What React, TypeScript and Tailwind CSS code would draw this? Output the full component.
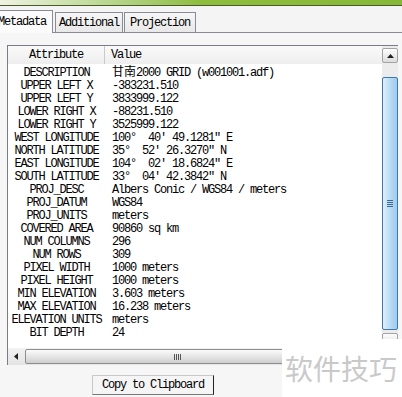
import React from 'react';

const rows: [string, React.ReactNode][] = [
  ['DESCRIPTION', <><span className="tracking-normal">甘南</span>2000 GRID (w001001.adf)</>],
  ['UPPER LEFT X', '-383231.510'],
  ['UPPER LEFT Y', '3833999.122'],
  ['LOWER RIGHT X', '-88231.510'],
  ['LOWER RIGHT Y', '3525999.122'],
  ['WEST LONGITUDE', '100°  40′ 49.1281″ E'],
  ['NORTH LATITUDE', '35°  52′ 26.3270″ N'],
  ['EAST LONGITUDE', '104°  02′ 18.6824″ E'],
  ['SOUTH LATITUDE', '33°  04′ 42.3842″ N'],
  ['PROJ_DESC', 'Albers Conic / WGS84 / meters'],
  ['PROJ_DATUM', 'WGS84'],
  ['PROJ_UNITS', 'meters'],
  ['COVERED AREA', '90860 sq km'],
  ['NUM COLUMNS', '296'],
  ['NUM ROWS', '309'],
  ['PIXEL WIDTH', '1000 meters'],
  ['PIXEL HEIGHT', '1000 meters'],
  ['MIN ELEVATION', '3.603 meters'],
  ['MAX ELEVATION', '16.238 meters'],
  ['ELEVATION UNITS', 'meters'],
  ['BIT DEPTH', '24'],
];

const App: React.FC = () => {
  return (
    <div className="relative w-[402px] h-[397px] overflow-hidden bg-[#f0f0f0] text-black text-[12px] tracking-[-1.2px] font-['Liberation_Mono','Noto_Sans_CJK_SC',monospace] whitespace-pre">
      {/* title strip */}
      <div className="h-[6px] bg-gradient-to-r from-[#eef3e2] via-[#8dbd3c] to-[#86b838] border-b border-[#4b5a2a]" />

      {/* Tabs */}
      <div className="h-[27px] flex items-end border-b border-[#898c95] bg-[#f4f4f4]">
        <div className="ml-[-10px] w-[63px] h-[23px] mb-[-1px] pl-[8px] flex items-center bg-[#fbfbfb] border-t border-r border-[#898c95]">
          Metadata
        </div>
        <div className="ml-[2px] w-[68px] h-[20px] flex items-center justify-center bg-gradient-to-b from-[#f7f7f7] to-[#e8e8e8] border border-b-0 border-[#898c95]">
          Additional
        </div>
        <div className="ml-[1px] w-[72px] h-[20px] flex items-center justify-center bg-gradient-to-b from-[#f7f7f7] to-[#e8e8e8] border border-b-0 border-[#898c95]">
          Projection
        </div>
      </div>

      {/* Panel */}
      <div className="pl-[7px] pr-[4px] pt-[12px] bg-[#f6f6f6] h-[364px]">
        <div className="border-l border-t border-[#7a7d84] flex flex-col">
          <div className="flex h-[302px]">
            <div className="flex-1 bg-white flex flex-col">
              {/* header */}
              <div className="h-[18px] flex bg-gradient-to-b from-[#fafafa] to-[#eeeeee]">
                <div className="w-[97px] border-r border-[#c9c9c9] flex items-center justify-center">Attribute</div>
                <div className="pl-[6px] flex items-center">Value</div>
              </div>
              <div className="h-[3px]" />
              {rows.map(([k, v]) => (
                <div key={k} className="h-[13px] leading-[13px] flex">
                  <div className="w-[97px] text-center">{k}</div>
                  <div className="pl-[7px]">{v}</div>
                </div>
              ))}
            </div>

            {/* vertical scrollbar */}
            <div className="w-[16px] flex flex-col bg-[#ececec] pt-[2px]">
              <div className="h-[15px] border border-[#a3a3a3] rounded-[2px] bg-gradient-to-b from-[#fdfdfd] to-[#dcdcdc] flex items-center justify-center">
                <svg width="7" height="4" viewBox="0 0 7 4"><path d="M0 4 L3.5 0 L7 4 Z" fill="#222" /></svg>
              </div>
              <div className="h-[14px]" />
              <div className="flex-1 border border-[#3d79a8] rounded-[2px] bg-gradient-to-r from-[#dff0fc] via-[#b9dcf5] to-[#9ecbee] flex items-center justify-center">
                <div className="flex flex-col gap-[1px]">
                  <div className="w-[6px] h-[1px] bg-[#3a6a90]" />
                  <div className="w-[6px] h-[1px] bg-[#3a6a90]" />
                  <div className="w-[6px] h-[1px] bg-[#3a6a90]" />
                  <div className="w-[6px] h-[1px] bg-[#3a6a90]" />
                </div>
              </div>
              <div className="h-[3px]" />
              <div className="h-[15px] border border-[#a3a3a3] rounded-[2px] bg-gradient-to-b from-[#fdfdfd] to-[#dcdcdc]" />
            </div>
          </div>

          {/* horizontal scrollbar */}
          <div className="h-[17px] flex items-center bg-gradient-to-b from-[#f2f2f2] to-[#e4e4e4]">
            <div className="w-[15px] h-[15px] flex items-center justify-center">
              <svg width="4" height="7" viewBox="0 0 4 7"><path d="M4 0 L0 3.5 L4 7 Z" fill="#222" /></svg>
            </div>
            <div className="ml-[2px] w-[305px] h-[15px] border border-[#8e8e8e] rounded-[2px] bg-gradient-to-b from-[#fbfbfb] via-[#e6e6e6] to-[#cfcfcf] flex items-center justify-center">
              <div className="flex gap-[1px]">
                <div className="w-[1px] h-[6px] bg-[#555]" />
                <div className="w-[1px] h-[6px] bg-[#555]" />
                <div className="w-[1px] h-[6px] bg-[#555]" />
                <div className="w-[1px] h-[6px] bg-[#555]" />
              </div>
            </div>
          </div>
        </div>

        <button className="mt-[10px] ml-[85px] w-[122px] h-[20px] flex items-center justify-center bg-[#f5f5f5] border border-[#c8c8c8] border-r-[#222] border-b-[#777]">
          Copy to Clipboard
        </button>
      </div>

      {/* watermark */}
      <div className="absolute left-[282px] top-[339px] w-[120px] h-[58px] bg-white flex items-center pl-[3px] tracking-normal text-[28px] text-[#c9c9c9] font-['Noto_Sans_CJK_SC',sans-serif]">
        软件技巧
      </div>
    </div>
  );
};

export default App;
